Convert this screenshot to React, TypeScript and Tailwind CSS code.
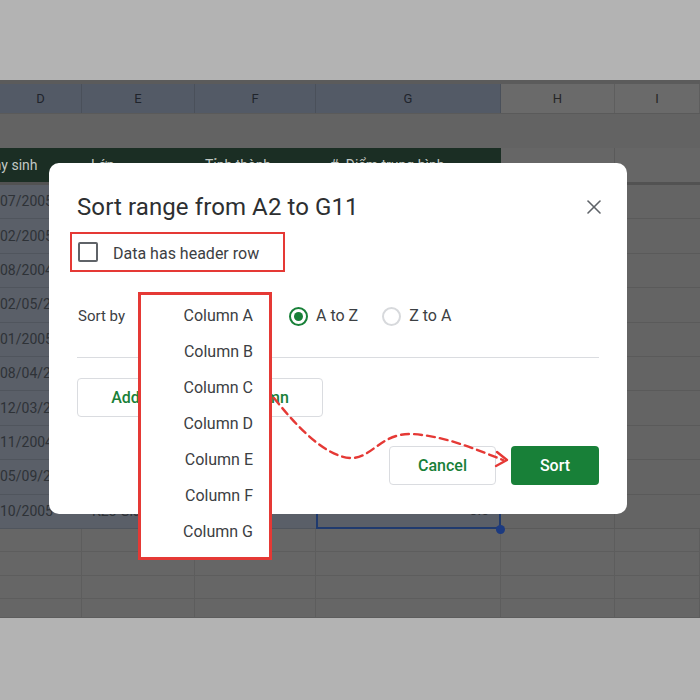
import React from "react"
import { X } from "lucide-react"

const cols = "grid grid-cols-[82px_113px_121px_185px_114px_85px]"

const dates = ["07/2005", "02/2005", "08/2004", "02/05/2005", "01/2005", "08/04/2005", "12/03/2005", "11/2004", "05/09/2005", "10/2005"]
const columns = ["Column A", "Column B", "Column C", "Column D", "Column E", "Column F", "Column G"]

function FilterIcon() {
    return (
        <svg width="10" height="10" viewBox="0 0 10 10" className="shrink-0">
            <path d="M2 3.5 L5 6.5 L8 3.5" stroke="#8a9590" strokeWidth="1.3" fill="none" />
        </svg>
    )
}

function Sheet() {
    return (
        <div className="flex flex-col border-t-4 border-[#5b5b5b] text-[#2e3237]">
            {/* column letters */}
            <div className={`${cols} h-[29px] text-[13px]`}>
                {["D", "E", "F", "G"].map(l => (
                    <div key={l} className="flex items-center justify-center bg-[#535a66] border-r border-[#4a505a] text-[#1f242c]">{l}</div>
                ))}
                {["H", "I"].map(l => (
                    <div key={l} className="flex items-center justify-center bg-[#6a6a6a] border-r border-[#5e5e5e] text-[#262626]">{l}</div>
                ))}
            </div>
            <div className="h-[35px] bg-[#636363] border-t border-[#5a5a5a]" />
            {/* table header row */}
            <div className={`${cols} h-[37px] text-[14px] text-[#c3c9c5] border-b-[3px] border-[#525252]`}>
                <div className="bg-[#1b2e24] flex items-center justify-between pr-[16px] overflow-hidden">
                    <span className="-ml-[24px] whitespace-nowrap">Ngày sinh</span>
                    <FilterIcon />
                </div>
                <div className="bg-[#1b2e24] flex items-center justify-between pl-[9px] pr-[12px]">
                    <span>Lớp</span>
                    <FilterIcon />
                </div>
                <div className="bg-[#1b2e24] flex items-center justify-between pl-[10px] pr-[16px]">
                    <span>Tỉnh thành</span>
                    <FilterIcon />
                </div>
                <div className="bg-[#1b2e24] flex items-center justify-between pl-[14px] pr-[16px]">
                    <span className="whitespace-nowrap"># &nbsp;Điểm trung bình</span>
                    <FilterIcon />
                </div>
                <div className="bg-[#666666] border-r border-[#5a5a5a]" />
                <div className="bg-[#666666]" />
            </div>
            {/* data rows */}
            {dates.map((d, i) => (
                <div key={i} className={`${cols} h-[34.4px] text-[14px]`}>
                    <div className="bg-[#5a5f68] border-b border-[#50555d] flex items-center overflow-hidden whitespace-nowrap">{d}</div>
                    <div className="bg-[#5a5f68] border-b border-[#50555d] flex items-center pl-[10px] whitespace-nowrap">{i === 9 ? "K23 Gia Lai" : ""}</div>
                    <div className="bg-[#5a5f68] border-b border-[#50555d]" />
                    <div className={`bg-[#5a5f68] flex items-center justify-end pr-[10px] ${i === 9 ? "border-x-2 border-b-2 border-[#1f3a6e]" : "border-b border-[#50555d]"}`}>{i === 9 ? "8.5" : ""}</div>
                    <div className="bg-[#646464] border-b border-r border-[#5a5a5a]" />
                    <div className="bg-[#646464] border-b border-[#5a5a5a]" />
                </div>
            ))}
            {/* empty rows */}
            {[23, 24, 23, 19].map((h, i) => (
                <div key={i} className={`${cols}`} style={{ height: h }}>
                    {[0, 1, 2, 3, 4, 5].map(c => (
                        <div key={c} className="bg-[#666666] border-b border-r border-[#5d5d5d]" />
                    ))}
                </div>
            ))}
        </div>
    )
}

function Modal() {
    return (
        <div className="absolute left-[49px] top-[163px] w-[578px] h-[351px] bg-white rounded-[10px] px-[28px] pt-[27px] text-[#3c4043] font-['Roboto',sans-serif]">
            <div className="flex items-center justify-between h-[34px]">
                <h2 className="text-[24px] text-[#2d2f31] tracking-[0.1px]">Sort range from A2 to G11</h2>
                <X size={24} strokeWidth={1.6} color="#5f6368" className="mr-[-7px]" />
            </div>
            <div className="-ml-[7px] mt-[8px] w-[215px] h-[40px] border-2 border-[#e53935] flex items-center pl-[6px] gap-[15px]">
                <div className="w-[20px] h-[20px] border-2 border-[#5f6368] rounded-[2px]" />
                <span className="text-[16px] mt-[3px]">Data has header row</span>
            </div>
            <div className="mt-[32px] h-[24px] flex items-center">
                <span className="w-[212px] text-[15px] pl-[1px]">Sort by</span>
                <div className="flex items-center">
                    <div className="w-[19px] h-[19px] rounded-full border-2 border-[#188038] flex items-center justify-center">
                        <div className="w-[9px] h-[9px] rounded-full bg-[#188038]" />
                    </div>
                    <span className="ml-[8px] text-[16px]">A to Z</span>
                    <div className="ml-[24px] w-[19px] h-[19px] rounded-full border-2 border-[#d7d9dc]" />
                    <span className="ml-[8px] text-[16px]">Z to A</span>
                </div>
            </div>
            <div className="mt-[29px] h-px bg-[#dadce0]" />
            <div className="mt-[20px] w-[246px] h-[39px] border border-[#dadce0] rounded-[4px] flex items-center justify-center text-[16px] font-medium text-[#188038]">
                Add another sort column
            </div>
            <div className="mt-[29px] flex justify-end gap-[15px]">
                <div className="w-[107px] h-[39px] border border-[#dadce0] rounded-[4px] flex items-center justify-center text-[16px] font-medium text-[#188038]">Cancel</div>
                <div className="w-[88px] h-[39px] bg-[#188038] rounded-[4px] flex items-center justify-center text-[16px] font-medium text-white">Sort</div>
            </div>
        </div>
    )
}

function Dropdown() {
    return (
        <div className="absolute left-[138px] top-[292px] w-[134px] h-[268px] bg-white border-[3px] border-[#e53935] pt-[3px] pr-[16px] font-['Roboto',sans-serif] text-[16px] text-[#3c4043]">
            {columns.map(c => (
                <div key={c} className="h-[36px] flex items-center justify-end">{c}</div>
            ))}
        </div>
    )
}

function Arrow() {
    return (
        <svg className="absolute left-0 top-0 pointer-events-none" width="700" height="700" viewBox="0 0 700 700">
            <path d="M274 398 C 298 428, 325 456, 350 458 C 372 459, 380 433, 412 434 C 445 436, 475 449, 503 460"
                stroke="#e53935" strokeWidth="2.4" strokeDasharray="8 5" fill="none" strokeLinecap="round" />
            <path d="M497 452 L507 460 L496 466" stroke="#e53935" strokeWidth="2.4" fill="none" strokeLinecap="round" strokeLinejoin="round" />
        </svg>
    )
}

export default function App() {
    return (
        <div className="relative w-[700px] h-[700px] bg-[#b3b3b3] overflow-hidden font-['Roboto',sans-serif]">
            <div className="h-[80px]" />
            <Sheet />
            <div className="absolute left-[496px] top-[525px] w-[9px] h-[9px] rounded-full bg-[#1c3a80]" />
            <Modal />
            <Dropdown />
            <Arrow />
        </div>
    )
}
